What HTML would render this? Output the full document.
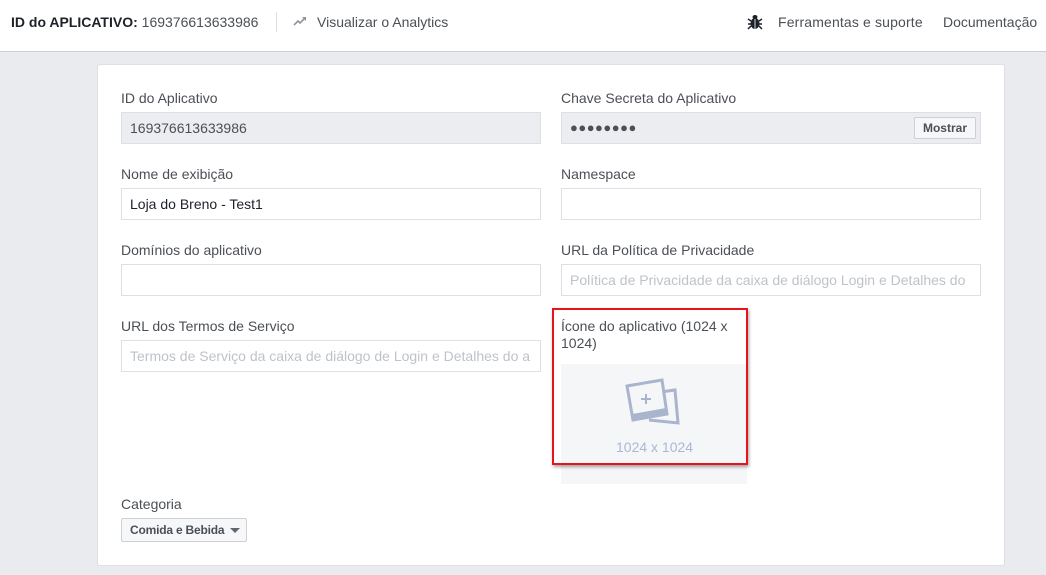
<!DOCTYPE html>
<html><head><meta charset="utf-8"><style>
*{box-sizing:border-box;margin:0;padding:0}
body{width:1046px;height:575px;background:#e9ebee;font-family:"Liberation Sans",sans-serif;font-size:14px;color:#1d2129;position:relative;overflow:hidden}
.top{position:absolute;left:0;top:0;width:1046px;height:52px;background:#fff;border-bottom:1px solid #ccd0d5}
.abs{position:absolute;white-space:nowrap}
.card{position:absolute;left:97px;top:64px;width:908px;height:502px;background:#fff;border:1px solid #dddfe2;border-radius:3px}
.lbl{position:absolute;color:#4b4f56;font-size:14px}
.inp{position:absolute;width:420px;height:32px;border:1px solid #dddfe2;background:#fff;padding:0 8px;line-height:30px;color:#1d2129;white-space:nowrap;overflow:hidden}
.ph{color:#bec3c9}
.dis{background:#ebedf0;color:#4b4f56}
</style></head><body>
<div class="top">
<div class="abs" style="left:11px;top:14px;color:#4b4f56"><b style="color:#1d2129">ID do APLICATIVO:</b> 169376613633986</div>
<div class="abs" style="left:276px;top:12px;width:1px;height:20px;background:#dddfe2"></div>
<svg class="abs" style="left:293px;top:16px" width="14" height="10" viewBox="0 0 14 10"><path d="M1 9 L5 5 L7 7 L12 2" stroke="#90949c" stroke-width="1.6" fill="none"/><path d="M9 1 H13 V5 Z" fill="#90949c"/></svg>
<div class="abs" style="left:317px;top:14px;color:#4b4f56">Visualizar o Analytics</div>
<svg class="abs" style="left:747px;top:13px" width="16" height="17" viewBox="0 0 16 17"><ellipse cx="8" cy="4" rx="2.5" ry="2" fill="#1d2129"/><ellipse cx="8" cy="10.5" rx="4.5" ry="5.5" fill="#1d2129"/><path d="M1 6 L4 8 M1 11 H4 M1 16 L4 13 M15 6 L12 8 M15 11 H12 M15 16 L12 13" stroke="#1d2129" stroke-width="1.5"/><path d="M8 6 V16" stroke="#fff" stroke-width="0.8"/></svg>
<div class="abs" style="left:778px;top:14px;color:#4b4f56;letter-spacing:0.15px">Ferramentas e suporte</div>
<div class="abs" style="left:943px;top:14px;color:#4b4f56">Documentação</div>
</div>
<div class="card"></div>
<div class="lbl abs" style="left:121px;top:90px">ID do Aplicativo</div>
<div class="inp dis" style="left:121px;top:112px">169376613633986</div>
<div class="lbl abs" style="left:561px;top:90px">Chave Secreta do Aplicativo</div>
<div class="inp dis" style="left:561px;top:112px;font-size:13px;letter-spacing:0.5px">●●●●●●●●</div>
<div class="abs" style="left:914px;top:117px;width:62px;height:22px;border:1px solid #ced0d4;background:#f6f7f9;border-radius:2px;font-size:12px;font-weight:bold;color:#4b4f56;text-align:center;line-height:20px">Mostrar</div>
<div class="lbl abs" style="left:121px;top:166px">Nome de exibição</div>
<div class="inp" style="left:121px;top:188px">Loja do Breno - Test1</div>
<div class="lbl abs" style="left:561px;top:166px">Namespace</div>
<div class="inp" style="left:561px;top:188px"></div>
<div class="lbl abs" style="left:121px;top:242px">Domínios do aplicativo</div>
<div class="inp" style="left:121px;top:264px"></div>
<div class="lbl abs" style="left:561px;top:242px">URL da Política de Privacidade</div>
<div class="inp ph" style="left:561px;top:264px">Política de Privacidade da caixa de diálogo Login e Detalhes do</div>
<div class="lbl abs" style="left:121px;top:318px">URL dos Termos de Serviço</div>
<div class="inp ph" style="left:121px;top:340px">Termos de Serviço da caixa de diálogo de Login e Detalhes do a</div>
<div class="lbl abs" style="left:561px;top:318px;line-height:17px">Ícone do aplicativo (1024 x<br>1024)</div>
<div class="abs" style="left:561px;top:364px;width:186px;height:120px;background:#f5f6f7"></div>
<svg class="abs" style="left:624px;top:378px" width="56" height="48" viewBox="0 0 56 48"><path d="M20 14 L53 10 L56 48 L22 44 Z" fill="#f5f6f7"/><path d="M22 16 L51 12 L54 45 L25 42" fill="none" stroke="#a9b4cf" stroke-width="3"/><path d="M3 8 L38 2 L43 36 L9 42 Z" fill="#f5f6f7" stroke="#a9b4cf" stroke-width="3"/><path d="M8 36 L42 30 L43 36 L9 42Z" fill="#a9b4cf"/><path d="M22 16 V26 M17 21 H27" stroke="#a9b4cf" stroke-width="2"/></svg>
<div class="abs" style="left:616px;top:439px;color:#a9b8d6;font-size:14px">1024 x 1024</div>
<div class="abs" style="left:552px;top:308px;width:196px;height:157px;border:2px solid #e8141b;box-shadow:1px 2px 3px rgba(0,0,0,.35)"></div>
<div class="lbl abs" style="left:121px;top:496px">Categoria</div>
<div class="abs" style="left:121px;top:518px;width:126px;height:24px;border:1px solid #ced0d4;background:#f6f7f9;border-radius:2px;font-size:12px;font-weight:bold;color:#4b4f56;line-height:22px;padding-left:8px;letter-spacing:-0.2px">Comida e Bebida <span style="display:inline-block;width:0;height:0;border-left:5px solid transparent;border-right:5px solid transparent;border-top:5px solid #606770;vertical-align:middle;margin-left:2px"></span></div>
</body></html>
